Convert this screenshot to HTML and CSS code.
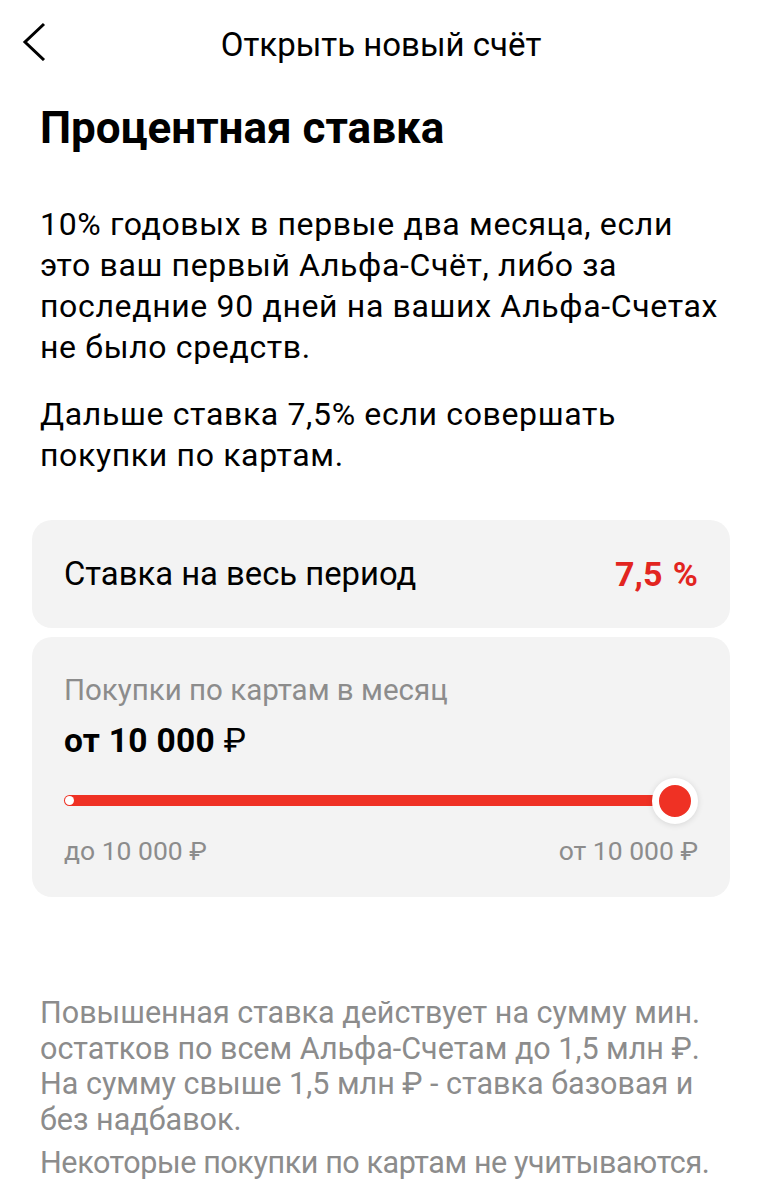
FILE: index.html
```html
<!DOCTYPE html>
<html lang="ru">
<head>
<meta charset="utf-8">
<link rel="stylesheet" href="styles.css">
</head>
<body>
<div class="page">
  <header class="topbar">
    <svg class="back" width="30" height="40" viewBox="0 0 30 40"><path d="M24 3 L5 21 L24 39" fill="none" stroke="#000" stroke-width="3"/></svg>
    <div class="title">Открыть новый счёт</div>
  </header>
  <main class="content">
    <h1 class="heading">Процентная ставка</h1>
    <p class="text">10% годовых в первые два месяца, если<br>это ваш первый Альфа-Счёт, либо за<br>последние 90 дней на ваших Альфа-Счетах<br>не было средств.</p>
    <p class="text">Дальше ставка 7,5% если совершать<br>покупки по картам.</p>
    <div class="card rate">
      <span class="rate-label">Ставка на весь период</span>
      <span class="rate-value">7,5 %</span>
    </div>
    <div class="card slider-card">
      <div class="s-label">Покупки по картам в месяц</div>
      <div class="s-value">от 10 000 <span class="rub">₽</span></div>
      <div class="slider">
        <div class="track"></div>
        <span class="start-dot"></span>
        <span class="thumb"></span>
      </div>
      <div class="range">
        <span>до 10 000 ₽</span>
        <span>от 10 000 ₽</span>
      </div>
    </div>
    <div class="notes">
      <p>Повышенная ставка действует на сумму мин.<br>остатков по всем Альфа-Счетам до 1,5 млн ₽.<br>На сумму свыше 1,5 млн ₽ - ставка базовая и<br>без надбавок.</p>
      <p class="last">Некоторые покупки по картам не учитываются.</p>
    </div>
  </main>
</div>
</body>
</html>
```

FILE: styles.css
```css
* { box-sizing: border-box; }
html, body { margin: 0; padding: 0; background: #fff; }
body {
  font-family: Roboto, "Noto Sans", "Liberation Sans", sans-serif;
  color: #000;
  width: 762px;
  height: 1200px;
  overflow: hidden;
}
.topbar {
  position: relative;
  height: 90px;
  display: flex;
  align-items: center;
  justify-content: center;
}
.back {
  position: absolute;
  left: 20px;
  top: 21px;
}
.title {
  font-size: 33px;
  font-weight: 400;
  margin-top: -1px;
  white-space: nowrap;
}
.content {
  padding: 0 32px;
}
.heading {
  margin: 13px 0 0 8px;
  font-size: 44px;
  font-weight: 700;
  line-height: 50px;
  white-space: nowrap;
}
.text {
  margin: 51px 0 0 8px;
  font-size: 32px;
  letter-spacing: 0.65px;
  line-height: 41px;
  white-space: nowrap;
}
.text + .text {
  margin-top: 26px;
}
.card {
  background: #f3f3f3;
  border-radius: 20px;
}
.rate {
  margin-top: 44px;
  height: 108px;
  padding: 0 32px;
  display: flex;
  align-items: center;
  justify-content: space-between;
}
.rate-label {
  font-size: 32.8px;
}
.rate-value {
  font-size: 34px;
  font-weight: 700;
  color: #e2251f;
  word-spacing: 2px;
}
.slider-card {
  margin-top: 9px;
  height: 260px;
  padding: 35px 32px 0 32px;
}
.s-label {
  font-size: 29.5px;
  color: #8c8c8c;
  line-height: 36px;
  white-space: nowrap;
}
.s-value {
  margin-top: 13px;
  font-size: 33.5px;
  font-weight: 700;
  line-height: 40px;
  letter-spacing: 0.3px;
}
.rub {
  font-weight: 400;
}
.slider {
  position: relative;
  height: 46px;
  margin-top: 17px;
}
.track {
  position: absolute;
  left: 0;
  right: 20px;
  top: 17px;
  height: 11px;
  border-radius: 6px;
  background: #ef3124;
}
.start-dot {
  position: absolute;
  left: 1px;
  top: 18px;
  width: 9px;
  height: 9px;
  border-radius: 50%;
  background: #fff;
}
.thumb {
  position: absolute;
  right: 0;
  top: 0;
  width: 46px;
  height: 46px;
  border-radius: 50%;
  background: #ef3124;
  border: 7px solid #fff;
  box-shadow: 0 1px 6px rgba(0,0,0,0.12);
}
.range {
  margin-top: 11px;
  display: flex;
  justify-content: space-between;
  font-size: 26.5px;
  line-height: 32px;
  color: #8c8c8c;
}
.notes {
  margin: 98px 0 0 8px;
  color: #8c8c8c;
  font-size: 30.5px;
  line-height: 35.5px;
  white-space: nowrap;
}
.notes p { margin: 0; }
.notes p + p { margin-top: 8px; }
.notes .last { letter-spacing: -0.4px; }
```
